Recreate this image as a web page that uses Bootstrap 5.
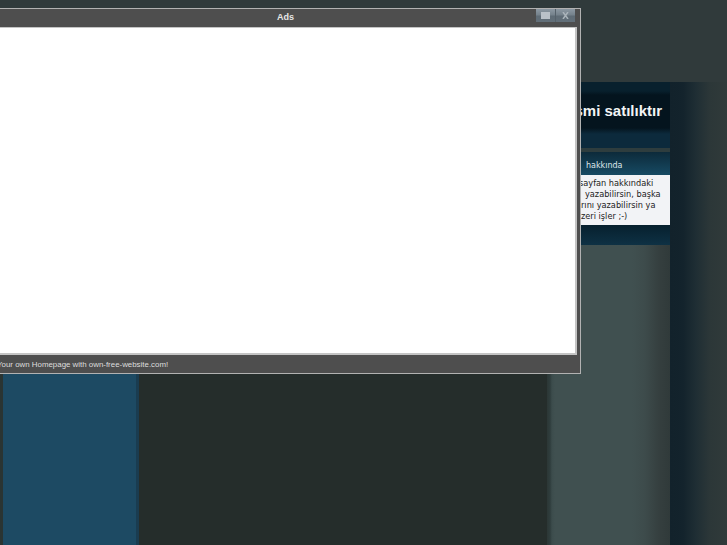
<!DOCTYPE html>
<html lang="tr">
<head>
<meta charset="utf-8">
<title>Ads</title>
<link href="https://cdn.jsdelivr.net/npm/bootstrap@5.3.0/dist/css/bootstrap.min.css" rel="stylesheet">
<style>
html,body{height:100%;overflow:hidden;background:#303a3b}
.page-shell{width:727px;height:545px;overflow:hidden}
.top-band{height:82px;background:#303a3b}
.columns{height:463px}
.left-edge{width:3px;background:#2a3432}
.left-col{width:136px;background:#1d4a63;border-right:3px solid #1a3c50}
.main-col{width:408px;background:#252d2b}
.side-col{width:123px;background:linear-gradient(90deg,#2b3635 0,#2f3d3d 3px,#3c4c4c 5px,#405050 8px,#405050 85px,#3d4b4b 98px,#353f3f 112px,#303a3a 123px)}
.far-col{width:57px;background:linear-gradient(90deg,#12222b 0,#13232c 13px,#1f2e34 26px,#2c3738 40px,#303a3a 57px)}
.title-box{height:66px;background:linear-gradient(180deg,#08202d 0,#08202d 9px,#04141e 13px,#04141e 46px,#0c2a3c 52px,#0c2a3c 100%);color:#f2f4f5;font:700 15px "Liberation Sans",sans-serif;padding-right:8px;padding-top:20px;white-space:nowrap}
.side-gap{height:4px;background:#2e3d3e}
.widget-box{height:93px;background:#0a2736}
.widget-head{height:23px;background:linear-gradient(180deg,#0c2a3a,#174a63);color:#dfe6ea;font:8px "DejaVu Sans",sans-serif;line-height:27px;padding-left:39px;white-space:nowrap}
.widget-body{height:50px;background:#f2f3f6;color:#222;font:8.2px/11px "DejaVu Sans",sans-serif;padding-top:3px;white-space:nowrap;overflow:hidden}
.text-line-a{margin-left:32px}
.text-line-b{margin-left:38px}
.text-line-c{margin-left:34px}
.widget-foot{height:20px;background:linear-gradient(180deg,#07202e,#0e3144)}
.ad-window{position:absolute;left:-10px;top:8px;width:591px;height:366px;background:#4e4e4e;border:1px solid #b2b2b2}
.ad-bar{height:18px;color:#e6e6e6;font:700 9px/17px "Liberation Sans",sans-serif}
.ad-content{height:328px;width:586px;background:#fff;border:1px solid #c4c4c4;border-right-width:2px;border-bottom-width:2px}
.ad-status{color:#ddd;font:7.9px/19px "Liberation Sans",sans-serif;padding-left:6px;white-space:nowrap}
.ad-controls{position:absolute;top:0;right:5px;width:39px;height:13px}
.ad-btn{width:19px;height:13px;background:linear-gradient(180deg,#8c98a2 0,#75828c 45%,#5e6b75 55%,#626f79 100%)}
.ad-btn+.ad-btn{border-left:1px solid #55616a;width:20px}
.ad-btn svg{display:block}
</style>
</head>
<body>
<div class="page-shell position-relative">
  <div class="top-band"></div>
  <div class="columns d-flex">
    <div class="left-edge"></div>
    <div class="left-col"></div>
    <div class="main-col"></div>
    <div class="side-col">
      <div class="title-box d-flex justify-content-end">smi satılıktır</div>
      <div class="side-gap"></div>
      <div class="widget-box">
        <div class="widget-head">hakkında</div>
        <div class="widget-body">
          <div class="text-line-a">sayfan hakkındaki</div>
          <div class="text-line-b">yazabilirsin, başka</div>
          <div class="text-line-c">rını yazabilirsin ya</div>
          <div class="text-line-c">zeri işler ;-)</div>
        </div>
        <div class="widget-foot"></div>
      </div>
    </div>
    <div class="far-col"></div>
  </div>
  <div class="ad-window">
    <div class="ad-bar text-center">Ads</div>
    <div class="ad-content"></div>
    <div class="ad-status">Your own Homepage with own-free-website.com!</div>
    <div class="ad-controls d-flex">
      <div class="ad-btn d-flex align-items-center justify-content-center"><svg width="9" height="7"><rect width="9" height="7" fill="#b9c1c8"/></svg></div>
      <div class="ad-btn d-flex align-items-center justify-content-center"><svg width="7" height="7" stroke="#a9b3ba" stroke-width="1.5"><path d="M1 0 6 7M6 0 1 7"/></svg></div>
    </div>
  </div>
</div>
<script src="https://cdn.jsdelivr.net/npm/bootstrap@5.3.0/dist/js/bootstrap.bundle.min.js"></script>
</body>
</html>
